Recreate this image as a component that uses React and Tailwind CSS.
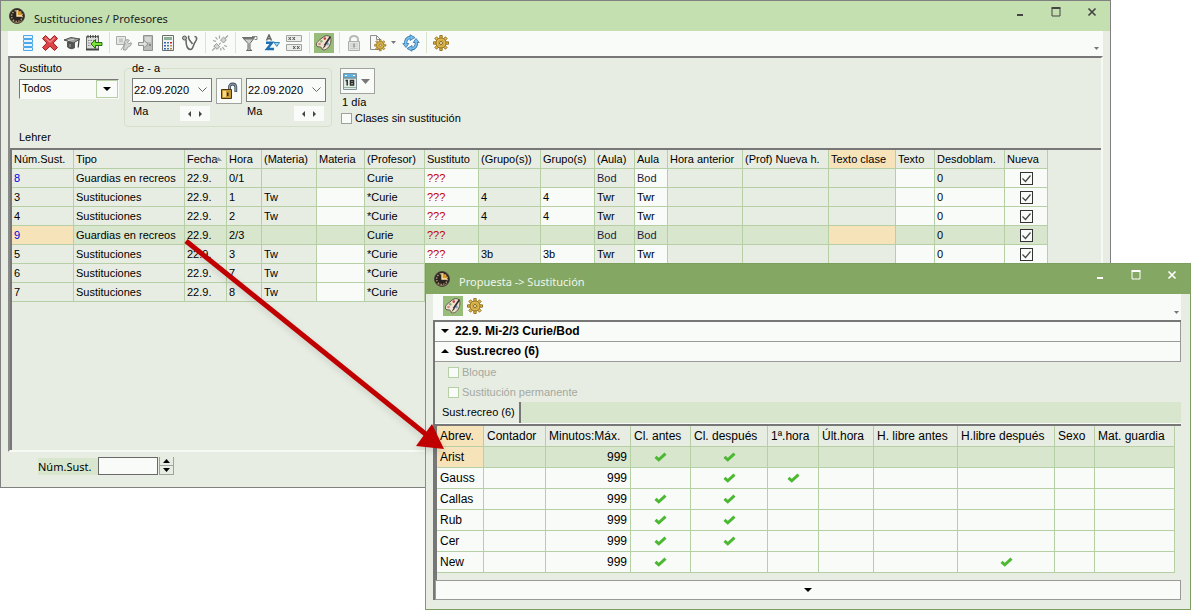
import React from 'react';

const mainColumns = [
    { label: 'Núm.Sust.', width: 62 },
    { label: 'Tipo', width: 111 },
    { label: 'Fecha', width: 42, sorted: true },
    { label: 'Hora', width: 35 },
    { label: '(Materia)', width: 55 },
    { label: 'Materia', width: 48 },
    { label: '(Profesor)', width: 60 },
    { label: 'Sustituto', width: 54 },
    { label: '(Grupo(s))', width: 62 },
    { label: 'Grupo(s)', width: 54 },
    { label: '(Aula)', width: 40 },
    { label: 'Aula', width: 33 },
    { label: 'Hora anterior', width: 75 },
    { label: '(Prof) Nueva h.', width: 86 },
    { label: 'Texto clase', width: 67, active: true },
    { label: 'Texto', width: 39 },
    { label: 'Desdoblam.', width: 70 },
    { label: 'Nueva', width: 43 }
];

const mainRows = [
    { id: '8', recreo: true, hora: '0/1' },
    { id: '3', hora: '1', grupo: '4' },
    { id: '4', hora: '2', grupo: '4' },
    { id: '9', recreo: true, hora: '2/3', selected: true },
    { id: '5', hora: '3', grupo: '3b' },
    { id: '6', hora: '7' },
    { id: '7', hora: '8' }
];

const proposalColumns = [
    { label: 'Abrev.', width: 47, active: true },
    { label: 'Contador', width: 62 },
    { label: 'Minutos:Máx.', width: 85 },
    { label: 'Cl. antes', width: 60 },
    { label: 'Cl. después', width: 77 },
    { label: '1ª.hora', width: 51 },
    { label: 'Últ.hora', width: 55 },
    { label: 'H. libre antes', width: 84 },
    { label: 'H.libre después', width: 97 },
    { label: 'Sexo', width: 40 },
    { label: 'Mat. guardia', width: 80 }
];

// checks = indexes of the columns that carry a green tick
const proposalRows = [
    { name: 'Arist', checks: [3, 4], selected: true },
    { name: 'Gauss', checks: [4, 5] },
    { name: 'Callas', checks: [3, 4] },
    { name: 'Rub', checks: [3, 4] },
    { name: 'Cer', checks: [3, 4] },
    { name: 'New', checks: [3, 8] }
];

/* ---------- Icons ---------- */

const Svg = ({ size = 18, children }) => (
    <svg width={size} height={size} viewBox="0 0 18 18" fill="none" aria-hidden="true" className="shrink-0">
        {children}
    </svg>
);

const ClockLogo = () => (
    <Svg>
        <circle cx="9" cy="9" r="7.5" fill="#2a2420" stroke="#4d4540" />
        <circle cx="9" cy="9" r="5.4" stroke="#b9a07c" strokeWidth="1.4" strokeDasharray="1.4 1.4" />
        <path d="M9 9V3.6A5.4 5.4 0 0 1 14.4 9z" fill="#d99a2c" />
        <path d="M9 3v6h5" stroke="#ffe9b0" strokeWidth="1.3" />
        <path d="M4 13.5a7 7 0 0 0 10 0" stroke="#8d7350" strokeWidth="1" />
    </Svg>
);

const RowsIcon = () => (
    <Svg>
        <path d="M4.5 1.5h9v3h-9zM4.5 5.500h9v3h-9zM4.500 9.500h9v3h-9zM4.500 13.500h9v3h-9z" fill="#e6f4fd" stroke="#4ba9ea" />
    </Svg>
);

const DeleteIcon = () => (
    <Svg>
        <path d="M4.5 1.5 9 5.8l4.5-4.3 3 3L12.2 9l4.3 4.5-3 3L9 12.2l-4.5 4.3-3-3L5.8 9 1.5 4.5z" fill="#dd4447" stroke="#9c1c22" strokeLinejoin="round" />
        <path d="m4.3 3.8 4.7 4.4 4.6-4.4" stroke="#f08a8c" strokeWidth="1.2" />
    </Svg>
);

const CapIcon = () => (
    <Svg>
        <path d="M4.500 8v5c2 2 5 2.300 7 .800V8z" fill="#555" stroke="#444" strokeWidth=".8" />
        <path d="M1 6 8 3.500l9 1.500-6.500 4z" fill="#9a9d9a" stroke="#444" strokeWidth=".9" />
        <path d="m5 6.500 6-1.200" stroke="#d0d3d0" />
        <path d="m16 5.500-.800 8" stroke="#444" strokeWidth="1.3" />
        <path d="M7 10v3" stroke="#aaa" />
    </Svg>
);

const CalendarBackIcon = () => (
    <Svg>
        <path d="M1.5 2.5h12v13h-12z" fill="#d9dcd9" stroke="#666" />
        <path d="M1 15.500h13" stroke="#444" strokeWidth="2" />
        <path d="M3 1v3M5.5 1v3M8 1v3M10.5 1v3M13 1v3" stroke="#444" />
        <path d="M3 6.500h8M3 9h4M3 11.5h3" stroke="#888" strokeDasharray="1.5 1" />
        <path d="M6 10 10.500 5.500v3H17v3h-6.500v3z" fill="#7fe03a" stroke="#22700f" strokeLinejoin="round" />
    </Svg>
);

const BoxWrenchIcon = () => (
    <Svg>
        <path d="M1.5 2.5h9v8h-9z" fill="#e6e8e6" stroke="#a9aca9" />
        <path d="M4 4.5h4v4H4z" fill="#c4c7c4" />
        <path d="m6 16 4.5-6.5M9.5 7.5c1-2 3.5-2.3 4.8-1.2l-1.8 2 1.3 1.4 2.4-1c.5 2.2-.8 4-3 4.1L11 16H8.5z" fill="#d0d3d0" stroke="#9c9f9c" />
    </Svg>
);

const DoorIcon = () => (
    <Svg>
        <path d="M6.5 1.5h9v15h-9z" fill="#b9bcb9" stroke="#8f928f" />
        <path d="M8 3h6v5H8z" fill="#d5d8d5" />
        <circle cx="13" cy="11" r="1" fill="#777" />
        <path d="M1.5 8.5h5V6l4.5 4-4.5 4v-2.5h-5z" fill="#e0e2e0" stroke="#8f928f" strokeLinejoin="round" />
    </Svg>
);

const CalculatorIcon = () => (
    <Svg>
        <path d="M3.5 1.5h11v15h-11z" fill="#f0f2f0" stroke="#6b6e6b" />
        <path d="M5 3h8v3H5z" fill="#8fb098" />
        <path d="M5 8h2v1.6H5zM5 11h2v1.6H5zM5 14h2v1.4H5z" fill="#3563b8" />
        <path d="M8 8h2v1.6H8zM8 11h2v1.6H8zM8 14h2v1.4H8z" fill="#3b7ec0" />
        <path d="M11 8h2v1.6h-2z" fill="#c22" />
        <path d="M11 11h2v1.6h-2zM11 14h2v1.4h-2z" fill="#c98a3a" />
    </Svg>
);

const StethoscopeIcon = () => (
    <Svg>
        <circle cx="3.5" cy="4" r="2" fill="#b9bcb9" stroke="#555" />
        <path d="M5 5.500c0 5.500 1.500 10 4.500 10 3 0 2.400-5 4.800-7.700 1.800-2.200 2-5.300-.8-5.300M8 1.800C6 4.500 9.500 7 11.500 10" stroke="#666" strokeWidth="1.600" />
    </Svg>
);

const PlugIcon = () => (
    <Svg>
        <path d="m9.5 6 3-2.8 2.8 2.6L12.5 9z" fill="#d3d6d3" stroke="#989b98" />
        <path d="m5.5 9.5 3.2 3.2-2.5 2.6-3.4-3z" fill="#d3d6d3" stroke="#989b98" />
        <path d="m14 4.5 3-3M3.8 14l-2.6 2.7M8 10.5l1.7-1.6M4.5 3l2 2.5M2 6.5l3 .8M8.5 1.5v3M13 11.5l3 1M11.5 13l2 3M9.8 14v2.5" stroke="#a1a4a1" strokeWidth="1.2" />
    </Svg>
);

const FunnelIcon = () => (
    <Svg>
        <path d="M1.5 3.500h12L9 9.5v6l2 1H5.500l1.500-1v-6z" fill="#cfd2cf" stroke="#666" strokeLinejoin="round" />
        <path d="M1.5 3.5h12l-1.400 2H3z" fill="#777" />
        <path d="M11 2.500h5v3h-2.500" stroke="#888" />
    </Svg>
);

const SortAZIcon = () => (
    <Svg>
        <path d="M3.5 6.500 6 1 8.5 6.500M4.500 4.700h3" stroke="#666" strokeWidth="1.5" />
        <path d="M3 8.800h6L4 15h7" stroke="#1f6fb5" strokeWidth="2.4" />
        <path d="M11 8.500h5.500l-2.700 4z" fill="#a8d6f2" stroke="#3686bd" />
    </Svg>
);

const CrossBoxesIcon = () => (
    <Svg>
        <path d="M1.5 1.5h15v6h-15zM1.5 10.5h15v6h-15z" fill="#eceeec" stroke="#a0a3a0" />
        <path d="m3.500 3 2.500 3M6 3 3.500 6M7.500 3 10 6M10 3 7.500 6M8 12l2.5 3M10.5 12 8 15M12 12l2.5 3M14.500 12 12 15" stroke="#555" />
    </Svg>
);

const PaletteIcon = () => (
    <Svg>
        <path d="M7 4c2-1.8 4-2.8 6.3-2.2C16 2.5 16.5 6 15.4 9.5c-1.2 3.8-4 6.6-7 6.4-2.2-.1-1.2-2-2.4-2.7C4.5 12.4 1.7 13.7 1.4 11 1.1 8.3 4 6.5 7 4z" fill="#efe2d2" stroke="#66594d" />
        <circle cx="4.5" cy="10" r="1.3" fill="#c98a80" />
        <circle cx="6.3" cy="7.3" r="1.2" fill="#8aa66d" />
        <circle cx="9.8" cy="4.6" r="1.3" fill="#c6453d" />
        <circle cx="12.5" cy="10" r="1.4" fill="#7da7c9" />
        <path d="m15.5 2.5-6 9" stroke="#333" strokeWidth="1.8" />
        <path d="m9.6 11-2.5 4.5 3.6-3.4z" fill="#3a3029" />
    </Svg>
);

const GreyLockIcon = () => (
    <Svg>
        <path d="M5 8V5.5C5 .8 13 .8 13 5.5V8" stroke="#b8bbb8" strokeWidth="2" />
        <path d="M3.5 7.5h11v9h-11z" fill="#e3e5e3" stroke="#acafac" />
        <path d="M5 10h8M5 12.2h8M5 14.5h8" stroke="#c8cbc8" />
        <path d="M8 9.5h2v4H8z" fill="#a5a8a5" />
    </Svg>
);

const gearTeeth = [0, 45, 90, 135, 180, 225, 270, 315];

const GearShape = () => (
    <>
        {gearTeeth.map((a) => (
            <path key={a} d="M7.800 1.500h2.400V5H7.800z" fill="#e0bb4e" stroke="#8d6a1b" strokeWidth=".9" transform={`rotate(${a} 9 9)`} />
        ))}
        <circle cx="9" cy="9" r="5" fill="#e3c056" stroke="#8d6a1b" strokeWidth=".9" />
        <circle cx="9" cy="9" r="3" stroke="#c19a35" strokeWidth=".8" />
        <circle cx="9" cy="9" r="1.500" fill="#fff6d5" stroke="#76560f" strokeWidth=".9" />
    </>
);

const GearIcon = () => (
    <Svg>
        <GearShape />
    </Svg>
);

const PageGearIcon = () => (
    <Svg>
        <path d="M1.5 1.500h6l4 4v10h-10z" fill="#f6f7f6" stroke="#8c8f8c" />
        <path d="M7.500 1.500v4h4" stroke="#8c8f8c" />
        <g transform="translate(4.500 4.500) scale(.75)">
            <GearShape />
        </g>
    </Svg>
);

const RefreshIcon = () => (
    <Svg>
        <path d="M3.8 10.500C3 6.500 5 3.500 8.500 3.400" stroke="#2f74ab" strokeWidth="3.200" />
        <path d="M14.200 7.500c.8 4-1.200 7-4.700 7.100" stroke="#2f74ab" strokeWidth="3.200" />
        <path d="m8 .8 5 2.700-5 3z" fill="#7cc0ee" stroke="#2f74ab" strokeWidth=".8" />
        <path d="M.8 9.500h6L4 13.500z" fill="#7cc0ee" stroke="#2f74ab" strokeWidth=".8" />
        <path d="m10 17.200-5-2.700 5-3z" fill="#7cc0ee" stroke="#2f74ab" strokeWidth=".8" />
        <path d="M17.200 8.500h-6L14 4.500z" fill="#7cc0ee" stroke="#2f74ab" strokeWidth=".8" />
        <path d="M3.8 10.500C3 6.500 5 3.500 8.500 3.400M14.200 7.500c.8 4-1.200 7-4.700 7.100" stroke="#7cc0ee" strokeWidth="1.700" />
    </Svg>
);

const OpenLockIcon = () => (
    <Svg>
        <path d="M9.500 8V5c0-4 6-4 6.300 0v5" stroke="#3f4a55" strokeWidth="2.800" />
        <path d="M9.500 8V5c0-4 6-4 6.300 0v4.500" stroke="#8fa3b5" strokeWidth="1.200" />
        <path d="M1.5 7.500h10v9h-10z" fill="#c79a3a" stroke="#4a350c" />
        <path d="M3 9h3v6H3z" fill="#f3da8d" />
        <path d="M7 10.5h1.5v3.5H7z" fill="#3a2806" />
    </Svg>
);

const DayIcon = () => (
    <svg width="14" height="17" viewBox="0 0 14 17" aria-hidden="true">
        <path d="M.5.500h13v16H.5z" fill="#e3ebe5" stroke="#7f929b" />
        <path d="M1 1h12v3.500H1z" fill="#5fb0dd" />
        <path d="M2 2.5h2M10 2.5h2" stroke="#fff" />
        <path d="M1 5h12" stroke="#4a6572" />
        <path d="M2.500 7.500h1.700v5M7.500 7.500h3v2h-3zM7.500 9.500h3v2.500h-3z" fill="none" stroke="#2b2f2d" strokeWidth="1.5" />
        <path d="M1 14.500h12" stroke="#9ab59f" />
    </svg>
);

const Caret = ({ up, width = 8, height = 4, color = '#000' }) => (
    <svg width={width} height={height} viewBox="0 0 8 4" preserveAspectRatio="none" aria-hidden="true" className="shrink-0">
        <path d={up ? 'M0 4 4 0l4 4z' : 'M0 0h8L4 4z'} fill={color} />
    </svg>
);

const GreenCheck = () => (
    <svg width="13" height="10" viewBox="0 0 13 10" role="img" aria-label="Sí" className="mx-auto block">
        <path d="m1.500 4.800 3.300 3L11.500 1.700" fill="none" stroke="#4bb832" strokeWidth="3" />
    </svg>
);

/* ---------- Shared pieces ---------- */

const WindowButtons = ({ color }) => (
    <div className="flex gap-4 pr-2">
        <button type="button" aria-label="Minimizar" className="flex size-5 items-center justify-center">
            <svg width="12" height="12" viewBox="0 0 12 12"><path d="M3 9h6" stroke={color} strokeWidth="2" /></svg>
        </button>
        <button type="button" aria-label="Maximizar" className="flex size-5 items-center justify-center">
            <svg width="12" height="12" viewBox="0 0 12 12"><path d="M2 2.5h8v7.5H2z" fill="none" stroke={color} /><path d="M1.5 2h9" stroke={color} strokeWidth="2" /></svg>
        </button>
        <button type="button" aria-label="Cerrar" className="flex size-5 items-center justify-center">
            <svg width="12" height="12" viewBox="0 0 12 12"><path d="m2.5 2.500 7 7m0-7-7 7" stroke={color} strokeWidth="1.7" /></svg>
        </button>
    </div>
);

const ToolButton = ({ label, active, children }) => (
    <button type="button" aria-label={label} aria-pressed={active} className="flex w-[22px] items-center justify-center">
        <span className={active ? 'flex size-5 items-center justify-center bg-[#98bd7b]' : 'flex size-5 items-center justify-center'}>
            {children}
        </span>
    </button>
);

const Separator = () => <div className="mr-[3px] ml-1 h-[21px] w-px bg-[#d8e4cd]"></div>;

const CheckBox = ({ id, checked, disabled, label }) => (
    <span className="inline-grid">
        <input
            id={id}
            type="checkbox"
            aria-label={label}
            defaultChecked={checked}
            disabled={disabled}
            className="peer size-[11px] appearance-none border border-[#9da09b] bg-[#f9fbf8] [grid-area:1/1] checked:size-[13px] checked:border-[#333] disabled:border-[#b7cfa5]"
        />
        <svg viewBox="0 0 13 13" aria-hidden="true" className="pointer-events-none invisible size-[11px] [grid-area:1/1] peer-checked:visible peer-checked:size-[13px]">
            <path d="m2.5 6.500 3 3 5-6" fill="none" stroke="#444" strokeWidth="1.2" />
        </svg>
    </span>
);

const DateBox = ({ id, label }) => (
    <div>
        <div className="flex h-6 w-20 items-center border border-[#7a7d7a] bg-[#f9fbf8]">
            <input id={id} aria-label={label} defaultValue="22.09.2020" className="w-14 min-w-0 flex-1 pl-px leading-4 outline-none" />
            <button type="button" aria-label="Abrir calendario" className="px-1">
                <svg width="9" height="6" viewBox="0 0 9 6"><path d="m.5.5 4 4 4-4" fill="none" stroke="#666" /></svg>
            </button>
        </div>
        <div className="flex items-start justify-between pr-0.5">
            <span className="pl-px leading-[19px]">Ma</span>
            <div className="mt-1 flex h-[15px] w-[30px] items-center justify-around bg-[#f9fbf8] px-1">
                <button type="button" aria-label="Día anterior">
                    <svg width="3" height="6" viewBox="0 0 3 6"><path d="M3 0v6L0 3z" fill="#444" /></svg>
                </button>
                <button type="button" aria-label="Día siguiente">
                    <svg width="3" height="6" viewBox="0 0 3 6"><path d="M0 0v6l3-3z" fill="#444" /></svg>
                </button>
            </div>
        </div>
    </div>
);

const GridHead = ({ columns, rowClass, cellClass }) => (
    <>
        <colgroup>
            {columns.map((c) => <col key={c.label} style={{ width: c.width }} />)}
        </colgroup>
        <thead>
            <tr className={rowClass}>
                {columns.map((c) => (
                    <th
                        key={c.label}
                        className={`relative overflow-hidden border-r border-b border-[#b7cfa5] text-left font-normal whitespace-nowrap ${cellClass} ${c.active ? 'bg-[#f6e3ba]' : ''}`}
                    >
                        {c.label}
                        {c.sorted && (
                            <span className="absolute top-[7px] right-1"><Caret up width={7} color="#8a9da8" /></span>
                        )}
                    </th>
                ))}
            </tr>
        </thead>
    </>
);

/* ---------- Main window ---------- */

const MainRow = ({ row }) => {
    const { recreo, selected } = row;
    const aula = recreo ? 'Bod' : 'Twr';
    const cells = [
        row.id,
        recreo ? 'Guardias en recreos' : 'Sustituciones',
        '22.9.',
        row.hora,
        recreo ? '' : 'Tw',
        '',
        recreo ? 'Curie' : '*Curie',
        '???',
        row.grupo,
        row.grupo,
        aula,
        aula,
        '', '', '', '',
        '0',
        <span className="flex justify-center"><CheckBox checked label={`Nueva ${row.id}`} /></span>
    ];
    const editable = recreo ? [7, 11, 15, 17] : [5, 7, 9, 11, 15, 16, 17];

    const background = (i) => {
        if (selected) return i === 0 || i === 14 ? 'bg-[#f6e3ba]' : '';
        return editable.includes(i) ? 'bg-[#f9fbf8]' : '';
    };

    const color = (i) => {
        if (i === 7) return 'text-[#c00000]';
        if (recreo && i === 0) return 'text-[#0000e0]';
        if (recreo && (i === 10 || i === 11)) return 'text-[#1c2340]';
        return '';
    };

    return (
        <tr className={selected ? 'h-[19px] bg-[#d8e6ce]' : 'h-[19px]'}>
            {cells.map((cell, i) => (
                <td key={i} className={`overflow-hidden border-r border-b border-[#b7cfa5] px-0.5 py-0 whitespace-nowrap ${background(i)} ${color(i)}`}>
                    {cell}
                </td>
            ))}
        </tr>
    );
};

const MainWindow = () => (
    <section className="mr-[81px] border border-[#808080] bg-[#e8ede3]">
        <header className="flex h-[30px] items-center gap-2 bg-[#c5e0b0] pl-[7px]">
            <ClockLogo />
            <h1 className="pt-1.5 font-['Noto_Sans'] text-[11px] text-[#222]">Sustituciones / Profesores</h1>
            <div className="-mt-2 ml-auto"><WindowButtons color="#444" /></div>
        </header>

        <div className="mx-[7px]">
            {/* Toolbar */}
            <div className="flex h-[25px] items-center bg-[#f9fbf8] pb-0.5 pl-[9px]">
                <ToolButton label="Lista"><RowsIcon /></ToolButton>
                <ToolButton label="Borrar"><DeleteIcon /></ToolButton>
                <ToolButton label="Profesores"><CapIcon /></ToolButton>
                <ToolButton label="Calendario"><CalendarBackIcon /></ToolButton>
                <Separator />
                <ToolButton label="Herramientas"><BoxWrenchIcon /></ToolButton>
                <ToolButton label="Aula"><DoorIcon /></ToolButton>
                <ToolButton label="Calculadora"><CalculatorIcon /></ToolButton>
                <ToolButton label="Diagnóstico"><StethoscopeIcon /></ToolButton>
                <Separator />
                <ToolButton label="Desconectar"><PlugIcon /></ToolButton>
                <Separator />
                <ToolButton label="Filtro"><FunnelIcon /></ToolButton>
                <ToolButton label="Ordenar"><SortAZIcon /></ToolButton>
                <ToolButton label="Columnas"><CrossBoxesIcon /></ToolButton>
                <Separator />
                <ToolButton label="Colores" active><PaletteIcon /></ToolButton>
                <Separator />
                <ToolButton label="Bloquear"><GreyLockIcon /></ToolButton>
                <button type="button" aria-label="Opciones de página" className="flex w-[35px] items-center gap-1 pl-1">
                    <PageGearIcon />
                    <Caret width={5} height={3} color="#777" />
                </button>
                <ToolButton label="Actualizar"><RefreshIcon /></ToolButton>
                <Separator />
                <ToolButton label="Ajustes"><GearIcon /></ToolButton>
                <span className="mt-3 mr-1 ml-auto"><Caret width={5} height={3} color="#777" /></span>
            </div>

            <div className="border-2 border-t-[#777] border-r-[#f6f9f4] border-b-[#f6f9f4] border-l-[#8a8a8a]">
                {/* Filters */}
                <div className="flex h-[90px] pl-[9px]">
                    <div className="flex w-[105px] flex-col pt-0.5">
                        <label htmlFor="sustituto" className="leading-4">Sustituto</label>
                        <div className="relative mt-[3px] flex w-[100px] border border-t-[#777] border-r-[#f9fbf8] border-b-[#f9fbf8] border-l-[#777] bg-[#f9fbf8]">
                            <select id="sustituto" defaultValue="Todos" className="h-[18px] w-full appearance-none pb-0.5 pl-0.5 outline-none">
                                <option>Todos</option>
                            </select>
                            <span className="pointer-events-none absolute inset-y-0 right-0 flex w-[22px] items-center justify-center border border-[#b7cfa5]"><Caret /></span>
                        </div>
                        <span className="mt-auto mb-[3px] leading-4">Lehrer</span>
                    </div>

                    <fieldset className="mt-0.5 h-[67px] rounded border border-[#d5e0c9] pt-0.5 pr-[5px] pl-[7px]">
                        <legend className="leading-4">de - a</legend>
                        <div className="flex gap-1">
                            <DateBox id="desde" label="Desde" />
                            <button type="button" aria-label="Desbloquear" className="flex h-[26px] w-[26px] items-center justify-center border border-[#a0a3a0] bg-[#f9fbf8]">
                                <OpenLockIcon />
                            </button>
                            <DateBox id="hasta" label="Hasta" />
                        </div>
                    </fieldset>

                    <div className="ml-2 pt-2.5">
                        <button type="button" aria-label="Periodo" className="flex h-[26px] w-[35px] items-center gap-1 border border-[#a0a3a0] bg-[#f9fbf8] pl-0.5">
                            <DayIcon />
                            <Caret width={9} height={5} color="#777" />
                        </button>
                        <div className="pl-0.5 leading-4">1 día</div>
                        <div className="flex items-center gap-[3px] pl-px">
                            <CheckBox id="sin-sustitucion" />
                            <label htmlFor="sin-sustitucion" className="leading-4">Clases sin sustitución</label>
                        </div>
                    </div>
                </div>

                {/* Substitutions */}
                <div className="h-[302px] overflow-hidden border-t-2 border-l-2 border-[#777]">
                    <table className="w-[1036px] table-fixed border-separate border-spacing-0">
                        <GridHead columns={mainColumns} rowClass="h-[19px]" cellClass="px-0.5 py-0" />
                        <tbody>
                            {mainRows.map((row) => <MainRow key={row.id} row={row} />)}
                        </tbody>
                    </table>
                </div>
            </div>
        </div>

        <footer className="flex h-[35px] items-start pt-[5px] pl-[37px]">
            <label htmlFor="num-sust" className="mt-px w-[60px] bg-[#d8e6ce] font-['Noto_Sans'] text-[11px] leading-[17px]">Núm.Sust.</label>
            <input id="num-sust" className="h-[18px] w-[60px] border border-[#696969] bg-[#f9fbf8] px-1 outline-none" />
            <div className="ml-px flex h-[18px] w-[15px] flex-col border-r border-b border-[#a0a3a0]">
                <button type="button" aria-label="Siguiente" className="flex flex-1 items-center justify-center border-b border-l border-[#a0a3a0]"><Caret up width={7} height={4} /></button>
                <button type="button" aria-label="Anterior" className="flex flex-1 items-center justify-center border-l border-[#a0a3a0]"><Caret width={7} height={4} /></button>
            </div>
        </footer>
    </section>
);

/* ---------- Proposal window ---------- */

const ProposalRow = ({ row }) => (
    <tr className={row.selected ? 'h-[21px] bg-[#d8e6ce]' : 'h-[21px] bg-[#f9fbf8]'}>
        {proposalColumns.map((c, i) => (
            <td
                key={c.label}
                className={`border-r border-b border-[#b7cfa5] px-[3px] py-0 ${i === 2 ? 'text-right' : ''} ${i === 0 && row.selected ? 'bg-[#f6e3ba]' : ''}`}
            >
                {i === 0 && row.name}
                {i === 2 && '999'}
                {row.checks.includes(i) && <GreenCheck />}
            </td>
        ))}
    </tr>
);

const ProposalWindow = () => (
    <section className="absolute top-[263px] right-px left-[425px] border border-[#7c9f5f] bg-[#e8ede3]">
        <header className="flex h-[30px] items-center gap-2 bg-[#84a864] pl-[7px]">
            <ClockLogo />
            <h2 className="pt-1.5 font-['Noto_Sans'] text-[11px] text-[#f0f5ea]">Propuesta -&gt; Sustitución</h2>
            <div className="-mt-2 ml-auto"><WindowButtons color="#fff" /></div>
        </header>

        <div className="mr-[9px] ml-[7px]">
            <div className="flex h-[26px] items-center bg-[#f9fbf8] pb-0.5 pl-[9px]">
                <ToolButton label="Colores" active><PaletteIcon /></ToolButton>
                <ToolButton label="Ajustes"><GearIcon /></ToolButton>
                <span className="mt-3 mr-0.5 ml-auto"><Caret width={5} height={3} color="#777" /></span>
            </div>

            <div className="border-t-2 border-l-2 border-[#777]">
                <button type="button" className="flex h-5 w-full items-center gap-1.5 border-r border-b border-[#999] bg-[#f9fbf8] pb-0.5 pl-1.5 text-xs font-bold">
                    <Caret width={8} height={4} />
                    22.9. Mi-2/3 Curie/Bod
                </button>
                <button type="button" className="flex h-5 w-full items-center gap-1.5 border-r border-b border-[#999] bg-[#f9fbf8] pb-0.5 pl-1.5 text-xs font-bold">
                    <Caret up width={8} height={4} />
                    Sust.recreo (6)
                </button>

                <div className="flex h-10 flex-col gap-1 pt-0.5 pl-[13px] text-[#a3a8a0]">
                    <div className="flex items-center gap-[3px]">
                        <CheckBox id="bloque" disabled />
                        <label htmlFor="bloque" className="leading-4">Bloque</label>
                    </div>
                    <div className="flex items-center gap-[3px]">
                        <CheckBox id="permanente" disabled />
                        <label htmlFor="permanente" className="leading-4">Sustitución permanente</label>
                    </div>
                </div>

                <div className="flex h-[22px] border-b border-[#f9fbf8] bg-[#d8e6ce]">
                    <button type="button" className="border-r-2 border-[#777] bg-[#e8ede3] pr-1 pb-0.5 pl-[7px] leading-4">Sust.recreo (6)</button>
                </div>

                <div className="border-t-2 border-l-2 border-[#777] pb-[7px]">
                    <table className="w-[738px] table-fixed border-separate border-spacing-0 text-xs">
                        <GridHead columns={proposalColumns} rowClass="h-[21px]" cellClass="px-[3px] py-0" />
                        <tbody>
                            {proposalRows.map((row) => <ProposalRow key={row.name} row={row} />)}
                        </tbody>
                    </table>
                </div>

                <button type="button" aria-label="Mostrar más" className="flex h-5 w-full items-center justify-center border border-[#999] bg-[#f9fbf8]">
                    <Caret />
                </button>
            </div>
            <div className="h-[9px]"></div>
        </div>
    </section>
);

const Pointer = () => (
    <svg width="480" height="480" viewBox="0 0 480 480" aria-hidden="true" className="pointer-events-none absolute top-0 left-0 drop-shadow-md">
        <path d="M186 241 428 436" stroke="#c00000" strokeWidth="5" />
        <path d="m444 449-12-25-16 22z" fill="#c00000" />
    </svg>
);

const App = () => (
    <main className="relative min-h-screen overflow-hidden bg-white font-['Liberation_Sans',sans-serif] text-[11px] text-black">
        <MainWindow />
        <ProposalWindow />
        <Pointer />
    </main>
);

export default App;
